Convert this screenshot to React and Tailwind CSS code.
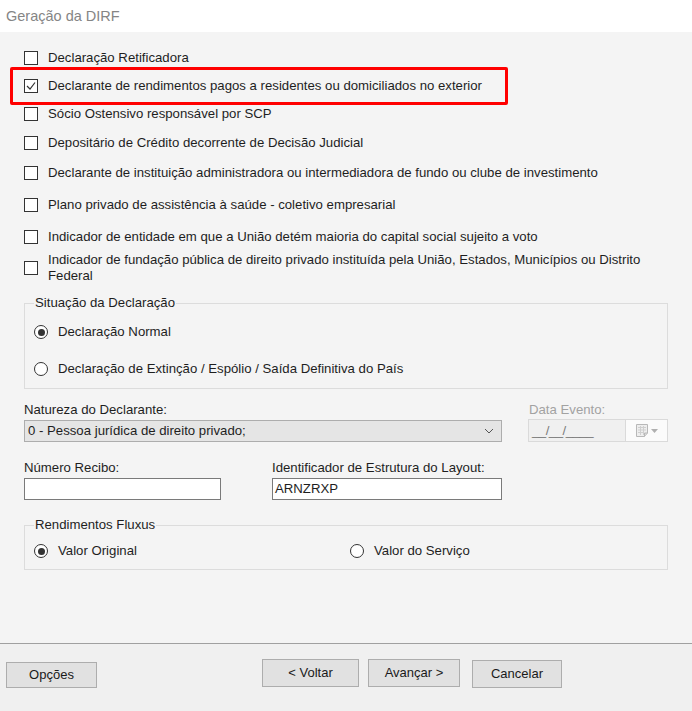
import React from 'react';

const Checkbox = ({ checked }) => (
  <span className="w-[14px] h-[14px] shrink-0 border border-[#333333] bg-white flex items-center justify-center">
    {checked && (
      <svg width="10" height="10" viewBox="0 0 10 10">
        <path d="M1 5 L4 8 L9 1.5" fill="none" stroke="#333333" strokeWidth="1.2" />
      </svg>
    )}
  </span>
);

const Radio = ({ checked }) => (
  <span className="w-[14px] h-[14px] shrink-0 rounded-full border border-[#333333] bg-white flex items-center justify-center">
    {checked && <span className="w-[7px] h-[7px] rounded-full bg-[#333333]" />}
  </span>
);

const CheckRow = ({ label, checked, className = '' }) => (
  <div className={`flex items-center h-[20px] gap-[10px] ${className}`}>
    <Checkbox checked={checked} />
    <span>{label}</span>
  </div>
);

const RadioRow = ({ label, checked, className = '' }) => (
  <div className={`flex items-center h-[20px] gap-[10px] ${className}`}>
    <Radio checked={checked} />
    <span>{label}</span>
  </div>
);

const Button = ({ children, className = '' }) => (
  <button className={`bg-[#e1e1e1] border border-[#adadad] flex items-center justify-center text-[13px] text-[#1a1a1a] ${className}`}>
    {children}
  </button>
);

const App = () => {
  return (
    <div className="w-[692px] h-[711px] flex flex-col overflow-hidden font-['Liberation_Sans',Arial,sans-serif] text-[13.2px] leading-[16px] text-[#1e1e1e]">
      {/* barra de titulo */}
      <div className="h-[32px] shrink-0 bg-white flex items-center pl-[6px] font-['Liberation_Sans',Arial,sans-serif] text-[14.5px] text-[#858585]">
        Geração da DIRF
      </div>

      <div className="flex-1 bg-[#f4f4f4] pl-[24px] pt-[16px] flex flex-col">
        <CheckRow label="Declaração Retificadora" />
        <div className="relative mt-[8px]">
          <CheckRow label="Declarante de rendimentos pagos a residentes ou domiciliados no exterior" checked />
          <div className="absolute left-[-14px] top-[-9px] w-[498px] h-[38px] border-[3px] border-[#ff0000] rounded-[2px]" />
        </div>
        <CheckRow className="mt-[8px]" label="Sócio Ostensivo responsável por SCP" />
        <CheckRow className="mt-[9px]" label="Depositário de Crédito decorrente de Decisão Judicial" />
        <CheckRow className="mt-[10px]" label="Declarante de instituição administradora ou intermediadora de fundo ou clube de investimento" />
        <CheckRow className="mt-[12px]" label="Plano privado de assistência à saúde - coletivo empresarial" />
        <CheckRow className="mt-[12px]" label="Indicador de entidade em que a União detém maioria do capital social sujeito a voto" />
        <div className="flex items-center gap-[10px] mt-[5px] h-[32px]">
          <Checkbox />
          <span className="w-[620px]">
            Indicador de fundação pública de direito privado instituída pela União, Estados, Municípios ou Distrito Federal
          </span>
        </div>

        <fieldset className="mt-[11px] w-[644px] border border-[#dcdcdc] pl-[9px] pb-[9px]">
          <legend className="px-[1px]">Situação da Declaração</legend>
          <RadioRow className="mt-[11px]" label="Declaração Normal" checked />
          <RadioRow className="mt-[17px]" label="Declaração de Extinção / Espólio / Saída Definitiva do País" />
        </fieldset>

        <div className="flex mt-[13px]">
          <div className="w-[478px]">
            <div>Natureza do Declarante:</div>
            <div className="mt-[2px] h-[22px] bg-[#e5e5e5] border border-[#adadad] flex items-center justify-between pl-[3px] pr-[7px]">
              <span>0 - Pessoa jurídica de direito privado;</span>
              <svg width="10" height="6" viewBox="0 0 10 6">
                <path d="M1 1 L5 5 L9 1" fill="none" stroke="#555555" strokeWidth="1" />
              </svg>
            </div>
          </div>
          <div className="ml-[26px] w-[140px]">
            <div className="pl-[1px] text-[#a2a2a2]">Data Evento:</div>
            <div className="mt-[1px] h-[23px] flex border border-[#dadada]">
              <div className="w-[97px] bg-[#f0f0f0] border-r border-[#dadada] flex items-center pl-[3px] text-[#7a7a7a] tracking-[-0.5px]">
                __/__/____
              </div>
              <div className="flex-1 bg-[#fbfbfb] flex items-center justify-center gap-[3px]">
                <svg width="12" height="13" viewBox="0 0 12 13">
                  <path d="M0.5 0.5 H11.5 V9 L8.5 12.5 H0.5 Z" fill="#eeeeee" stroke="#b8b8b8" />
                  <path d="M2 3.5 H10 M2 6 H10 M2 8.5 H8 M4.5 2 V11 M7.5 2 V11" stroke="#cfcfcf" strokeWidth="1" />
                  <path d="M8.5 12.5 V9 H11.5" fill="#d8d8d8" stroke="#b8b8b8" />
                </svg>
                <svg width="7" height="4" viewBox="0 0 7 4">
                  <path d="M0 0 H7 L3.5 4 Z" fill="#b0b0b0" />
                </svg>
              </div>
            </div>
          </div>
        </div>

        <div className="flex mt-[18px]">
          <div className="w-[197px]">
            <div>Número Recibo:</div>
            <div className="mt-[2px] h-[22px] bg-white border border-[#7a7a7a]" />
          </div>
          <div className="ml-[51px] w-[230px]">
            <div>Identificador de Estrutura do Layout:</div>
            <div className="mt-[2px] h-[22px] bg-white border border-[#7a7a7a] flex items-center pl-[2px]">ARNZRXP</div>
          </div>
        </div>

        <fieldset className="mt-[17px] w-[644px] border border-[#dcdcdc] pl-[9px] pb-[8px]">
          <legend className="px-[1px]">Rendimentos Fluxus</legend>
          <div className="flex mt-[8px]">
            <RadioRow className="w-[316px]" label="Valor Original" checked />
            <RadioRow label="Valor do Serviço" />
          </div>
        </fieldset>
      </div>

      {/* rodape com botoes */}
      <div className="h-[68px] shrink-0 bg-[#f0f0f0] border-t border-[#a0a0a0] flex items-start">
        <Button className="ml-[6px] mt-[18px] w-[91px] h-[26px]">Opções</Button>
        <Button className="ml-[165px] mt-[15px] w-[97px] h-[28px]">&lt; Voltar</Button>
        <Button className="ml-[9px] mt-[15px] w-[92px] h-[28px]">Avançar &gt;</Button>
        <Button className="ml-[12px] mt-[16px] w-[90px] h-[28px]">Cancelar</Button>
      </div>
    </div>
  );
};

export default App;
